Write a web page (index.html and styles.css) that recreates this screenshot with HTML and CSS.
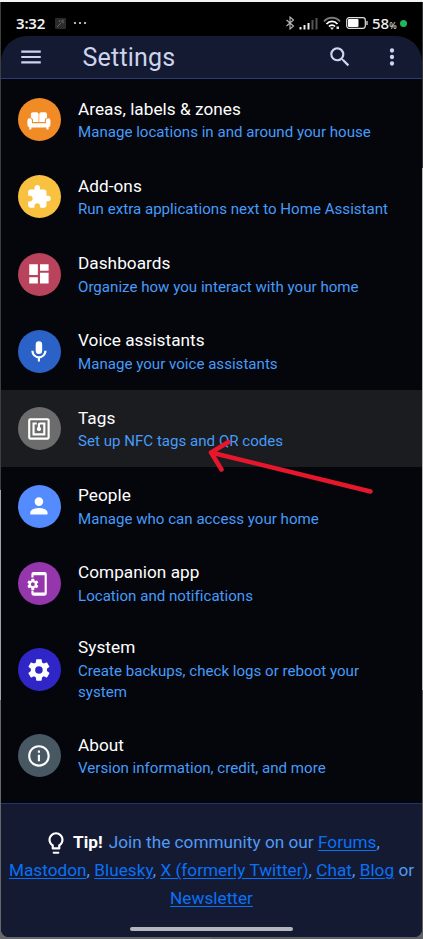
FILE: index.html
```html
<!DOCTYPE html>
<html lang="en">
<head>
<meta charset="utf-8">
<title>Settings</title>
<link rel="stylesheet" href="styles.css">
</head>
<body>
<div class="phone">
  <div class="status">
    <span class="clock">3:32</span>
    <svg class="notif" viewBox="0 0 11 11"><rect width="11" height="11" rx="1" fill="#2b2b2b"/><path d="M2 9l4-4M6 3l3 2M7 2l2 1M4 4l1-2" stroke="#777" stroke-width=".8" fill="none"/></svg>
    <span class="dots"><i></i><i></i><i></i></span>
    <svg class="bt" viewBox="0 0 10 14"><path d="M1.5 4l7 6L5 13V1l3.500 3-7 6" fill="none" stroke="#bbb" stroke-width="1.100"/></svg>
    <svg class="signal" viewBox="0 0 19 13"><path d="M1.500 10v2.500M5.500 8v4.500M9.500 6v6.500" stroke="#eee" stroke-width="2"/><path d="M13.500 3v9.500M17.500 1v11.500" stroke="#555" stroke-width="2"/></svg>
    <svg class="wifi" viewBox="0 0 18 14"><path d="M1 5.500C5 .500 13 .500 17 5.500" stroke="#777" fill="none" stroke-width="2"/><path d="M3.500 8c3-3.500 8-3.500 11 0M6 10.500c1.500-1.800 4.500-1.800 6 0" stroke="#fff" fill="none" stroke-width="1.800"/><path d="M7 11.500h4L9 14zM13.500 10.500h2.500v2.500h-2.500z" fill="#ddd"/></svg>
    <svg class="battery" viewBox="0 0 22 12"><rect x=".700" y=".700" width="18.600" height="10.600" rx="2.500" fill="none" stroke="#ddd" stroke-width="1.200"/><rect x="2" y="2" width="10.500" height="8" rx="1" fill="#fff"/><path d="M21 4v4" stroke="#ddd" stroke-width="1.300"/></svg>
    <span class="percent">58<small>%</small></span>
    <i class="live"></i>
  </div>

  <header class="toolbar">
    <svg class="icon" viewBox="0 0 24 24"><path d="M3,6H21V8H3V6M3,11H21V13H3V11M3,16H21V18H3V16Z"/></svg>
    <h1>Settings</h1>
    <svg class="icon" viewBox="0 0 24 24"><path d="M9.500,3A6.500,6.500 0 0,1 16,9.500C16,11.110 15.410,12.590 14.440,13.730L14.710,14H15.500L20.500,19L19,20.500L14,15.500V14.710L13.730,14.440C12.590,15.410 11.110,16 9.500,16A6.500,6.500 0 0,1 3,9.500A6.500,6.500 0 0,1 9.500,3M9.500,5C7,5 5,7 5,9.500C5,12 7,14 9.500,14C12,14 14,12 14,9.500C14,7 12,5 9.500,5Z"/></svg>
    <svg class="icon more" viewBox="0 0 24 24"><path d="M12,16A2,2 0 0,1 14,18A2,2 0 0,1 12,20A2,2 0 0,1 10,18A2,2 0 0,1 12,16M12,10A2,2 0 0,1 14,12A2,2 0 0,1 12,14A2,2 0 0,1 10,12A2,2 0 0,1 12,10M12,4A2,2 0 0,1 14,6A2,2 0 0,1 12,8A2,2 0 0,1 10,6A2,2 0 0,1 12,4Z"/></svg>
  </header>

  <main class="list">
    <div class="row">
      <span class="badge orange"><svg class="icon" viewBox="0 0 24 24"><path d="M4.500 10V6.800Q4.500 4.800 6.500 4.800H9.800Q11.700 4.800 11.700 6.800V14H6.500V12Q6.300 10.300 4.500 10M12.300 14V6.800Q12.300 4.800 14.200 4.800H17.500Q19.500 4.800 19.500 6.800V10Q17.700 10.300 17.500 12V14ZM1.300 12.500A2.100 2.100 0 0 1 5.500 12.500V15H18.500V12.500A2.100 2.100 0 0 1 22.700 12.500V16.500Q22.700 18.700 21 18.900V21H19V19H5V21H3V18.900Q1.300 18.700 1.300 16.500Z"/></svg></span>
      <div class="text"><h2>Areas, labels &amp; zones</h2><p>Manage locations in and around your house</p></div>
    </div>
    <div class="row">
      <span class="badge yellow"><svg class="icon" viewBox="0 0 24 24"><path d="M20.500,11H19V7C19,5.890 18.100,5 17,5H13V3.500A2.500,2.500 0 0,0 10.500,1A2.500,2.500 0 0,0 8,3.500V5H4A2,2 0 0,0 2,7V10.800H3.500C5,10.800 6.200,12 6.200,13.500C6.200,15 5,16.200 3.500,16.200H2V20A2,2 0 0,0 4,22H7.800V20.500C7.800,19 9,17.800 10.500,17.800C12,17.800 13.200,19 13.200,20.500V22H17A2,2 0 0,0 19,20V16H20.500A2.500,2.500 0 0,0 23,13.500A2.500,2.500 0 0,0 20.500,11Z"/></svg></span>
      <div class="text"><h2>Add-ons</h2><p>Run extra applications next to Home Assistant</p></div>
    </div>
    <div class="row">
      <span class="badge red"><svg class="icon" viewBox="0 0 24 24"><path d="M13,3V9H21V3M13,21H21V11H13M3,21H11V15H3M3,13H11V3H3V13Z"/></svg></span>
      <div class="text"><h2>Dashboards</h2><p>Organize how you interact with your home</p></div>
    </div>
    <div class="row">
      <span class="badge blue"><svg class="icon" viewBox="0 0 24 24"><path d="M12,2A3,3 0 0,1 15,5V11A3,3 0 0,1 12,14A3,3 0 0,1 9,11V5A3,3 0 0,1 12,2M19,11C19,14.530 16.390,17.440 13,17.930V21H11V17.930C7.610,17.440 5,14.530 5,11H7A5,5 0 0,0 12,16A5,5 0 0,0 17,11H19Z"/></svg></span>
      <div class="text"><h2>Voice assistants</h2><p>Manage your voice assistants</p></div>
    </div>
    <div class="row active">
      <span class="badge gray"><svg class="icon" viewBox="0 0 24 24"><path d="M18,6H13A2,2 0 0,0 11,8V10.280C10.410,10.620 10,11.260 10,12A2,2 0 0,0 12,14C13.110,14 14,13.100 14,12C14,11.260 13.600,10.620 13,10.280V8H16V16H8V8H10V6H8L6,6V18H18M20,20H4V4H20M20,2H4A2,2 0 0,0 2,4V20A2,2 0 0,0 4,22H20C21.110,22 22,21.100 22,20V4C22,2.890 21.110,2 20,2Z"/></svg></span>
      <div class="text"><h2>Tags</h2><p>Set up NFC tags and QR codes</p></div>
      <svg class="arrow" viewBox="0 0 170 56"><path d="M164.500 46.500L5 7.500L22.500 -3M5 7.500L15.500 24.500"/></svg>
    </div>
    <div class="row">
      <span class="badge sky"><svg class="icon" viewBox="0 0 24 24"><path d="M12,4A4,4 0 0,1 16,8A4,4 0 0,1 12,12A4,4 0 0,1 8,8A4,4 0 0,1 12,4M12,14C16.420,14 20,15.790 20,18V20H4V18C4,15.790 7.580,14 12,14Z"/></svg></span>
      <div class="text"><h2>People</h2><p>Manage who can access your home</p></div>
    </div>
    <div class="row">
      <span class="badge purple"><svg class="icon" viewBox="0 0 24 24"><path d="M5 6V3Q5 1 7 1H17.300Q19.300 1 19.300 3V21Q19.300 23 17.300 23H7Q5 23 5 21V18H7V20H17.300V4H7V6Z"/><path transform="translate(.1 6.100) scale(.52)" d="M12,15.500A3.500,3.500 0 0,1 8.500,12A3.500,3.500 0 0,1 12,8.500A3.500,3.500 0 0,1 15.500,12A3.500,3.500 0 0,1 12,15.500M19.430,12.970C19.470,12.650 19.500,12.330 19.500,12C19.500,11.670 19.470,11.340 19.430,11L21.540,9.370C21.730,9.220 21.780,8.950 21.660,8.730L19.660,5.270C19.540,5.050 19.270,4.960 19.050,5.050L16.560,6.050C16.040,5.660 15.500,5.320 14.870,5.070L14.500,2.420C14.460,2.180 14.250,2 14,2H10C9.750,2 9.540,2.180 9.500,2.420L9.130,5.070C8.500,5.320 7.960,5.660 7.440,6.050L4.950,5.050C4.730,4.960 4.460,5.050 4.340,5.270L2.340,8.730C2.210,8.950 2.270,9.220 2.460,9.370L4.570,11C4.530,11.340 4.500,11.670 4.500,12C4.500,12.330 4.530,12.650 4.570,12.970L2.460,14.630C2.270,14.780 2.210,15.050 2.340,15.270L4.340,18.730C4.460,18.950 4.730,19.030 4.950,18.950L7.440,17.940C7.960,18.340 8.500,18.680 9.130,18.930L9.500,21.580C9.540,21.820 9.750,22 10,22H14C14.250,22 14.460,21.820 14.500,21.580L14.870,18.930C15.500,18.670 16.040,18.340 16.560,17.940L19.050,18.950C19.270,19.030 19.540,18.950 19.660,18.730L21.660,15.270C21.780,15.050 21.730,14.780 21.540,14.630L19.430,12.970Z"/></svg></span>
      <div class="text"><h2>Companion app</h2><p>Location and notifications</p></div>
    </div>
    <div class="row tall">
      <span class="badge indigo"><svg class="icon" viewBox="0 0 24 24"><path d="M12,15.500A3.500,3.500 0 0,1 8.500,12A3.500,3.500 0 0,1 12,8.500A3.500,3.500 0 0,1 15.500,12A3.500,3.500 0 0,1 12,15.500M19.430,12.970C19.470,12.650 19.500,12.330 19.500,12C19.500,11.670 19.470,11.340 19.430,11L21.540,9.370C21.730,9.220 21.780,8.950 21.660,8.730L19.660,5.270C19.540,5.050 19.270,4.960 19.050,5.050L16.560,6.050C16.040,5.660 15.500,5.320 14.870,5.070L14.500,2.420C14.460,2.180 14.250,2 14,2H10C9.750,2 9.540,2.180 9.500,2.420L9.130,5.070C8.500,5.320 7.960,5.660 7.440,6.050L4.950,5.050C4.730,4.960 4.460,5.050 4.340,5.270L2.340,8.730C2.210,8.950 2.270,9.220 2.460,9.370L4.570,11C4.530,11.340 4.500,11.670 4.500,12C4.500,12.330 4.530,12.650 4.570,12.970L2.460,14.630C2.270,14.780 2.210,15.050 2.340,15.270L4.340,18.730C4.460,18.950 4.730,19.030 4.950,18.950L7.440,17.940C7.960,18.340 8.500,18.680 9.130,18.930L9.500,21.580C9.540,21.820 9.750,22 10,22H14C14.250,22 14.460,21.820 14.500,21.580L14.870,18.930C15.500,18.670 16.040,18.340 16.560,17.940L19.050,18.950C19.270,19.030 19.540,18.950 19.660,18.730L21.660,15.270C21.780,15.050 21.730,14.780 21.540,14.630L19.430,12.970Z"/></svg></span>
      <div class="text"><h2>System</h2><p>Create backups, check logs or reboot your system</p></div>
    </div>
    <div class="row">
      <span class="badge slate"><svg class="icon" viewBox="0 0 24 24"><path d="M11,9H13V7H11M12,20C7.590,20 4,16.410 4,12C4,7.590 7.590,4 12,4C16.410,4 20,7.590 20,12C20,16.410 16.410,20 12,20M12,2A10,10 0 0,0 2,12A10,10 0 0,0 12,22A10,10 0 0,0 22,12A10,10 0 0,0 12,2M11,17H13V11H11V17Z"/></svg></span>
      <div class="text"><h2>About</h2><p>Version information, credit, and more</p></div>
    </div>
  </main>

  <footer class="tip">
    <p><svg class="icon bulb" viewBox="0 0 24 24"><path d="M12,2A7,7 0 0,1 19,9C19,11.380 17.810,13.470 16,14.740V17A1,1 0 0,1 15,18H9A1,1 0 0,1 8,17V14.740C6.190,13.470 5,11.380 5,9A7,7 0 0,1 12,2M9,21V20H15V21A1,1 0 0,1 14,22H10A1,1 0 0,1 9,21M12,4A5,5 0 0,0 7,9C7,11.050 8.230,12.810 10,13.580V16H14V13.580C15.770,12.810 17,11.050 17,9A5,5 0 0,0 12,4Z"/></svg><b>Tip!</b><span>Join the community on our <a>Forums</a>,</span><br><a>Mastodon</a>, <a>Bluesky</a>, <a>X (formerly Twitter)</a>, <a>Chat</a>, <a>Blog</a> or<br><a>Newsletter</a></p>
    <div class="home-bar"></div>
  </footer>
</div>
</body>
</html>
```
FILE: styles.css
```css
* { box-sizing: border-box; }
body {
  margin: 0;
  height: 939px;
  padding: 2px 1px 2px;
  overflow: hidden;
  font-family: Roboto, sans-serif;
  background:
    linear-gradient(#f4f4f4, #f4f4f4) 0 0 / 100% 2px no-repeat,
    linear-gradient(#3c3e42 490px, #a3a3a3 490px 700px, #66676a 700px) 0 0 / 212px 100% no-repeat,
    linear-gradient(#34363a 168px, #b5b5b5 168px 690px, #606164 690px) 100% 0 / 212px 100% no-repeat;
}
h1, h2, p { margin: 0; font-weight: 400; }
.phone {
  height: 935px;
  display: flex;
  flex-direction: column;
  background: #000;
  border-radius: 0 0 8px 8px;
  overflow: hidden;
}
.icon { width: 26px; height: 26px; fill: currentColor; flex: none; display: block; }

.status {
  height: 34px;
  padding: 8px 15px 0 15px;
  display: flex;
  align-items: center;
  color: #f0f0ec;
  font: 600 15px "Noto Sans", sans-serif;
}
.clock { width: 39px; letter-spacing: -.2px; }
.notif { width: 11px; height: 11px; margin-right: 8px; }
.dots { display: flex; gap: 3px; margin-right: auto; }
.dots i { width: 2px; height: 2px; border-radius: 1px; background: #eee; }
.bt { width: 10px; height: 14px; margin-right: 4px; }
.signal { width: 19px; height: 13px; margin-right: 5px; }
.wifi { width: 18px; height: 14px; margin-right: 5px; }
.battery { width: 22px; height: 12px; margin-right: 4px; }
.percent { width: 25px; margin-right: 3px; white-space: nowrap; font-weight: 500; }
.percent small { font-size: 9px; font-weight: 400; }
.live { width: 7px; height: 7px; border-radius: 50%; background: #20b75b; }

.toolbar {
  height: 43px;
  flex: none;
  display: flex;
  align-items: center;
  padding: 0 17px 0 17px;
  color: #ccd5ed;
  background: #151a33;
  border-bottom: 1px solid #2b3d78;
  border-radius: 26px 26px 0 0;
}
.toolbar h1 {
  margin: 0 auto 0 38.500px;
  padding-top: 1px;
  font-size: 25px;
  line-height: 34px;
  letter-spacing: .2px;
}
.more { margin-left: 26px; }

.list { height: 724px; flex: none; padding-top: 2px; background: #04060b; }
.row {
  position: relative;
  height: 77.3px;
  padding-left: 17px;
  display: flex;
  align-items: center;
  gap: 17px;
}
.row.tall { height: 95px; }
.row.active { background: #1b1c1f; z-index: 1; }
.badge {
  width: 43px;
  height: 43px;
  flex: none;
  border-radius: 50%;
  display: flex;
  align-items: center;
  justify-content: center;
  color: #fff;
}
.badge .icon { width: 25.850px; height: 25.850px; margin-right: .5px; }
.orange { background: #f08b26; }
.yellow { background: #f9c140; }
.red { background: #b9425c; }
.blue { background: #2b62c8; }
.gray { background: #6c6c6c; }
.sky { background: #548bff; }
.purple { background: #9536ac; }
.indigo { background: #3026c8; }
.slate { background: #485863; }
.text { width: 318px; padding-top: 1px; }
.text h2 { font-size: 17.2px; line-height: 25.600px; letter-spacing: .04px; color: #fff; }
.text p { max-width: 314px; font-size: 15.080px; line-height: 21.500px; letter-spacing: .01px; color: #479bfa; }
.tall .text { width: 300px; padding-top: 0; }
.arrow {
  position: absolute;
  left: 205px;
  top: 55px;
  width: 170px;
  height: 56px;
  overflow: visible;
  fill: none;
  stroke: #e6162d;
  stroke-width: 4.500px;
  stroke-linecap: round;
  stroke-linejoin: round;
}

.tip {
  flex: 1;
  display: flex;
  flex-direction: column;
  align-items: center;
  justify-content: space-between;
  padding: 24px 0 6px;
  background: #151a33;
  border-top: 1px solid #203469;
  color: #4f9bf5;
  font-size: 17.200px;
  line-height: 28px;
  letter-spacing: .02px;
  text-align: center;
  white-space: nowrap;
}
.tip b { color: #fff; font-weight: 700; margin: 0 6px 0 4px; }
.tip a { color: #0871f7; text-decoration: underline; text-underline-offset: 2px; }
.bulb { display: inline-block; vertical-align: middle; color: #fff; }
.home-bar { width: 163px; height: 4px; border-radius: 2px; background: #b5b5bd; }
```
